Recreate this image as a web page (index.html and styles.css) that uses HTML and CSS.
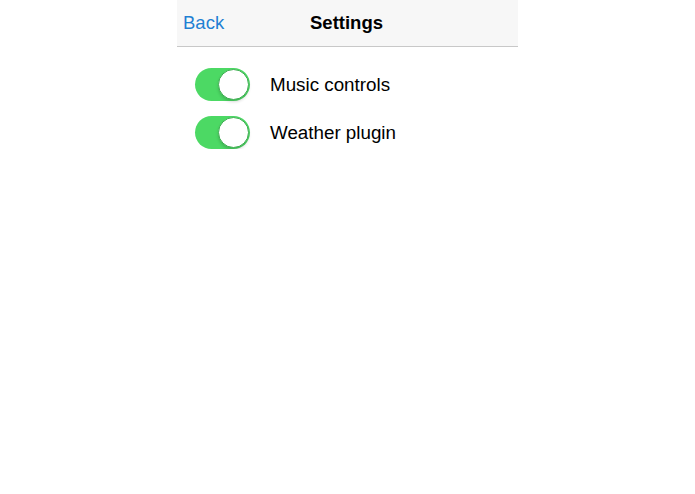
FILE: index.html
```html
<!DOCTYPE html>
<html lang="en">
<head>
    <meta charset="UTF-8">
    <meta name="viewport" content="width=device-width, initial-scale=1.0">
    <title>Settings</title>
    <link rel="stylesheet" href="styles.css">
</head>
<body>
    <div class="page">
        <div class="navbar">
            <a class="back-btn" href="#">Back</a>
            <h1 class="nav-title">Settings</h1>
        </div>

        <ul class="settings">
            <li class="setting-row">
                <label class="switch">
                    <input type="checkbox" checked>
                    <span class="slider"></span>
                </label>
                <span class="setting-label">Music controls</span>
            </li>
            <li class="setting-row">
                <label class="switch">
                    <input type="checkbox" checked>
                    <span class="slider"></span>
                </label>
                <span class="setting-label">Weather plugin</span>
            </li>
        </ul>
    </div>
</body>
</html>
```

FILE: styles.css
```css
body {
    margin: 0;
    font-family: "Liberation Sans", Arial, sans-serif;
    background: white;
    color: #000;
}

.page {
    width: 341px;
    margin: 0 auto;
}

/* Nav bar */
.navbar {
    position: relative;
    height: 46px;
    background: #f7f7f7;
    border-bottom: 1px solid #c8c8c8;
    display: flex;
    align-items: center;
    justify-content: center;
}

.back-btn {
    position: absolute;
    left: 6px;
    top: 12px;
    color: #1f80d3;
    text-decoration: none;
    font-size: 18.5px;
}

.nav-title {
    margin: 0;
    font-size: 18.5px;
    font-weight: bold;
    margin-left: -2px;
}

/* Settings list */
.settings {
    list-style: none;
    margin: 0;
    padding: 21px 0 0 18px;
    display: flex;
    flex-direction: column;
    gap: 15px;
}

.setting-row {
    display: flex;
    align-items: center;
    gap: 20px;
}

.setting-label {
    font-size: 18.8px;
}

.switch {
    position: relative;
    display: inline-block;
    width: 55px;
    height: 33px;
    flex-shrink: 0;
}

.switch input {
    display: none;
}

.slider {
    position: absolute;
    inset: 0;
    background: #4cd964;
    border-radius: 17px;
    cursor: pointer;
}

.slider:before {
    content: "";
    position: absolute;
    top: 1px;
    right: 1px;
    width: 29px;
    height: 29px;
    border-radius: 50%;
    background: white;
    border: 1px solid #3fae52;
    box-shadow: 0 2px 3px rgba(0, 0, 0, 0.15);
}
```
